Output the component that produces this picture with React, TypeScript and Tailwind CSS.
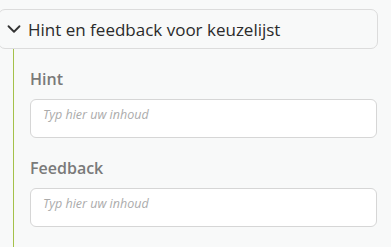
import { ChevronDown } from 'lucide-react';

function Field({ label }: { label: string }) {
  return (
    <div className="flex flex-col">
      <label className="mb-[8px] text-[16px] font-semibold leading-[24px] text-[#7a7a7a]">{label}</label>
      <textarea
        rows={1}
        placeholder="Typ hier uw inhoud"
        className="block h-[39px] w-full resize-none overflow-hidden rounded-[6px] border border-[#d6d6d6] bg-white px-[12px] pt-[5px] text-[12.5px] leading-[20px] italic text-[#333] outline-none placeholder:text-[#ababab]"
      />
    </div>
  );
}

export default function App() {
  return (
    <div
      className="h-[247px] w-[391px] overflow-hidden bg-[#f8f9f9] pt-[9px]"
      style={{ fontFamily: '"Open Sans", sans-serif' }}
    >
      <div className="-ml-[2px] mr-[13px] flex h-[40px] items-center rounded-[7px] border border-[#dcdcdc] bg-[#f8f9f9] pl-[4px]">
        <ChevronDown size={22} strokeWidth={2} className="text-[#333]" />
        <span className="ml-[3px] text-[17px] leading-none text-[#2b2b2b]">Hint en feedback voor keuzelijst</span>
      </div>
      <div className="ml-[13px] flex h-full flex-col gap-[18px] border-l border-[#a5c14a] pl-[16px] pr-[14px] pt-[18px]">
        <Field label="Hint" />
        <Field label="Feedback" />
      </div>
    </div>
  );
}
